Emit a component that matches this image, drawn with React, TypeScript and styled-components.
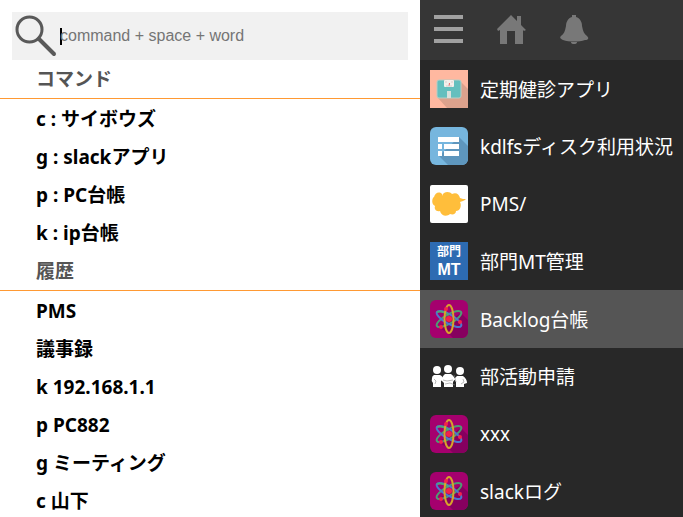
import React from 'react';
import styled, { createGlobalStyle } from 'styled-components';

const GlobalStyle = createGlobalStyle`
  * { box-sizing: border-box; }
  body {
    margin: 0;
    overflow: hidden;
    background: #fff;
    font-family: 'Noto Sans', 'Noto Sans CJK JP', sans-serif;
    font-size: 19px;
  }
`;

const Page = styled.div`
  display: grid;
  grid-template-columns: minmax(0, 420fr) minmax(0, 263fr);
  height: 100vh;
  overflow: hidden;
`;

const Launcher = styled.main`
  min-width: 0;
`;

const SearchBar = styled.label`
  display: flex;
  align-items: center;
  height: 48px;
  margin: 12px 12px 0;
  background: #f1f1f1;
  cursor: text;
`;

const SearchIcon = styled.svg`
  flex: none;
  width: 48px;
  height: 48px;
`;

const Caret = styled.span`
  flex: none;
  width: 2px;
  height: 17px;
  margin-right: -2px;
  background: #000;
`;

const SearchInput = styled.input`
  flex: 1;
  min-width: 0;
  padding: 0;
  border: 0;
  outline: 0;
  background: transparent;
  caret-color: transparent;
  color: #222;
  font: 16px 'Liberation Sans', sans-serif;

  &::placeholder {
    color: #757575;
    opacity: 1;
  }
`;

const Heading = styled.h2`
  margin: 0 0 1px;
  padding-left: 36px;
  border-bottom: 1px solid #ff9933;
  color: #555;
  font-size: 19px;
  font-weight: 700;
  line-height: 38px;
`;

const EntryList = styled.ul`
  margin: 0;
  padding: 0;
  list-style: none;
`;

const Entry = styled.button`
  display: block;
  width: 100%;
  height: 38px;
  padding: 0 36px;
  border: 0;
  background: transparent;
  color: #000;
  font: inherit;
  font-weight: 700;
  line-height: 38px;
  text-align: left;
  white-space: nowrap;
`;

const Sidebar = styled.aside`
  min-width: 0;
  background: #282828;
  color: #fff;
`;

const Toolbar = styled.nav`
  display: flex;
  align-items: center;
  gap: 34px;
  height: 60px;
  padding: 0 14px 2px;
  background: #363636;
`;

const ToolButton = styled.button`
  display: flex;
  padding: 0;
  border: 0;
  background: transparent;

  svg {
    width: 29px;
    height: 29px;
  }
`;

const AppList = styled.ul`
  display: grid;
  grid-auto-rows: 1fr;
  min-height: 460px;
  margin: 0;
  padding: 0;
  list-style: none;
`;

const AppItem = styled.li`
  display: flex;
  min-width: 0;
`;

const AppLink = styled.a<{ $selected?: boolean }>`
  display: flex;
  flex: 1;
  align-items: center;
  gap: 12px;
  min-width: 0;
  padding: 0 10px;
  background: ${({ $selected }) => ($selected ? '#555' : 'transparent')};
  color: #fff;
  text-decoration: none;
  white-space: nowrap;

  svg {
    flex: none;
    width: 38px;
    height: 38px;
  }
`;

const ScaleIcon = () => (
  <svg viewBox="0 0 38 38" aria-hidden="true">
    <path fill="#ffb8a0" d="M0 0h38v38H0z" />
    <path fill="#dca28d" d="M30 11 38 19v19H17L8 28z" />
    <rect x="7" y="10" width="24" height="18" rx="2" fill="#64bfbe" stroke="#b8cec5" strokeWidth="1" />
    <rect x="14" y="10" width="10" height="7" rx="1" fill="#f5efec" />
    <path d="m19 16 .5-3" stroke="#e66" strokeWidth="1" />
    <path d="M15 12h2m4 0h2M16 16h6" stroke="#d8cfcd" strokeWidth="1" />
    <path fill="#d9e1dc" d="M17 21h4v7h-4z" />
  </svg>
);

const ListIcon = () => (
  <svg viewBox="0 0 38 38" aria-hidden="true">
    <rect width="38" height="38" rx="6" fill="#76b6de" />
    <path fill="#5e96bd" d="m29 10 9 9v13a6 6 0 0 1-6 6H18l-9-9z" />
    <path fill="#fff" d="M8 10h21v5H8zM8 17h4v5H8zM14 17h15v5H14zM8 24h4v5H8zM14 24h15v5H14z" />
  </svg>
);

const CloudIcon = () => (
  <svg viewBox="0 0 38 38" aria-hidden="true">
    <rect width="38" height="38" rx="2" fill="#fff" />
    <path
      fill="#ffbe3b"
      d="M12 11c1-5 8-5 10-2 4-2 7 0 8 4 2 1 4 1 6 1-2 2-4 2-6 3 2 4 0 9-4 9 0 3-3 4-6 3-3 3-9 2-10-3-4 1-6-2-5-5-4-2-3-8-1-9 1-4 5-6 8-3z"
    />
  </svg>
);

const DepartmentIcon = () => (
  <svg viewBox="0 0 38 38" aria-hidden="true">
    <path fill="#2d6bb2" d="M0 0h38v38H0z" />
    <g fill="#fff" textAnchor="middle" fontWeight="700">
      <text x="19" y="14" fontSize="12" fontFamily="'Noto Sans CJK JP', sans-serif">部門</text>
      <text x="19" y="33" fontSize="16" fontFamily="'Liberation Sans', sans-serif">MT</text>
    </g>
  </svg>
);

const AtomIcon = () => (
  <svg viewBox="0 0 38 38" aria-hidden="true">
    <rect width="38" height="38" rx="6" fill="#a5006e" />
    <path fill="#86005f" d="m31 13 7 7v12a6 6 0 0 1-6 6H23l-5-5-10-6z" />
    <g fill="none" strokeWidth="2">
      <ellipse cx="19" cy="19" rx="4.500" ry="14" stroke="#4d9d73" transform="rotate(60 19 19)" />
      <ellipse cx="19" cy="19" rx="4.500" ry="14" stroke="#4b79cf" transform="rotate(-60 19 19)" />
      <path d="M7 12q5-2 12 3" stroke="#51a579" />
      <ellipse cx="19" cy="19" rx="4.500" ry="14" stroke="#d8a32b" />
    </g>
    <g fill="#f3224b">
      <circle cx="19" cy="19" r="3" />
      <circle cx="16" cy="9" r="2" />
      <circle cx="30" cy="22" r="2" />
      <circle cx="11" cy="27" r="2" />
    </g>
  </svg>
);

const PeopleIcon = () => (
  <svg viewBox="0 0 38 38" aria-hidden="true">
    <g fill="#fff">
      <circle cx="7" cy="13" r="4" />
      <circle cx="18" cy="12" r="4" />
      <circle cx="30" cy="14" r="4" />
      <path d="M4 18h6q3 1 3 5l-2 1v6H3v-4q-2-2-1-5 0-2 2-3zM15 17h6q3 2 4 5l-2 3v5h-9v-4l-2-2q0-5 3-7zM27 19h6q4 3 4 7l-3 1v3h-8v-5l-2-3z" />
    </g>
    <path d="m4 22 2 2-1 3M13 23l4 1 6-1M15 27l5-1 5 2M24 18l2 7M33 22l1 3-3 2" fill="none" stroke="#888" strokeWidth=".6" />
  </svg>
);

const MenuIcon = () => (
  <svg viewBox="0 0 29 29" aria-hidden="true">
    <path d="M0 2h29M0 14h29M0 26h29" stroke="#a1a1a1" strokeWidth="4" />
  </svg>
);

const HomeIcon = () => (
  <svg viewBox="0 0 29 29" fill="#787878" aria-hidden="true">
    <path d="M14 0 20 6V1h4v9l5 5-2 1-1-1v14h-8V16H10v13H3V15l-2 1-1-2z" />
  </svg>
);

const BellIcon = () => (
  <svg viewBox="0 0 29 29" fill="#787878" aria-hidden="true">
    <path d="M12 2V0h4v2c4 1 6 5 6 9 1 5 2 8 5 10 3 3 0 4-2 4-6 2-16 2-22 0-2-1-4-2-2-4 3-2 4-5 5-10 0-4 2-8 6-9zM11 27h6q0 2-3 2t-3-2z" />
  </svg>
);

const commands = ['c : サイボウズ', 'g : slackアプリ', 'p : PC台帳', 'k : ip台帳'];
const history = ['PMS', '議事録', 'k 192.168.1.1', 'p PC882', 'g ミーティング', 'c 山下'];

const apps = [
  { name: '定期健診アプリ', Icon: ScaleIcon },
  { name: 'kdlfsディスク利用状況', Icon: ListIcon },
  { name: 'PMS/', Icon: CloudIcon },
  { name: '部門MT管理', Icon: DepartmentIcon },
  { name: 'Backlog台帳', Icon: AtomIcon, selected: true },
  { name: '部活動申請', Icon: PeopleIcon },
  { name: 'xxx', Icon: AtomIcon },
  { name: 'slackログ', Icon: AtomIcon },
];

const Section = ({ title, entries }: { title: string; entries: string[] }) => (
  <section>
    <Heading>{title}</Heading>
    <EntryList>
      {entries.map((entry) => (
        <li key={entry}>
          <Entry type="button">{entry}</Entry>
        </li>
      ))}
    </EntryList>
  </section>
);

export default function App() {
  return (
    <>
      <GlobalStyle />
      <Page>
        <Launcher>
          <SearchBar>
            <SearchIcon viewBox="0 0 48 48" aria-hidden="true">
              <g fill="none" stroke="#595959">
                <circle cx="17.500" cy="17.500" r="12.500" strokeWidth="3" />
                <path d="m27 27 15 15" strokeWidth="4" strokeLinecap="round" />
              </g>
            </SearchIcon>
            <Caret />
            <SearchInput type="text" aria-label="command" placeholder="command + space + word" />
          </SearchBar>
          <Section title="コマンド" entries={commands} />
          <Section title="履歴" entries={history} />
        </Launcher>
        <Sidebar>
          <Toolbar>
            <ToolButton type="button" aria-label="メニュー"><MenuIcon /></ToolButton>
            <ToolButton type="button" aria-label="ホーム"><HomeIcon /></ToolButton>
            <ToolButton type="button" aria-label="通知"><BellIcon /></ToolButton>
          </Toolbar>
          <AppList>
            {apps.map(({ name, Icon, selected }) => (
              <AppItem key={name}>
                <AppLink href="#" $selected={selected}>
                  <Icon />
                  {name}
                </AppLink>
              </AppItem>
            ))}
          </AppList>
        </Sidebar>
      </Page>
    </>
  );
}
